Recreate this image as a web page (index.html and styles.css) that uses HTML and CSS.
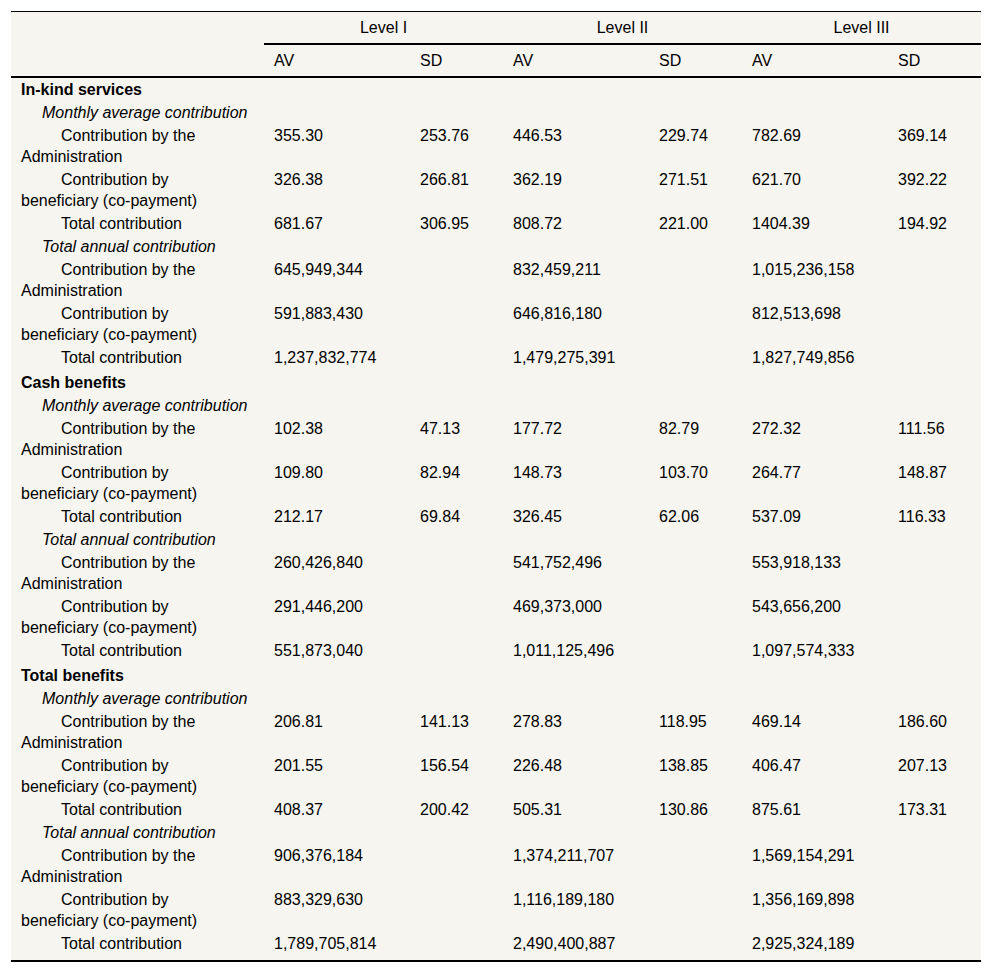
FILE: index.html
```html
<!DOCTYPE html>
<html lang="en">
<head>
<meta charset="utf-8">
<title>Contributions by level</title>
<link rel="stylesheet" href="styles.css">
</head>
<body>
<div class="wrap">
<table class="data">
  <colgroup>
    <col class="c-label">
    <col class="c-av"><col class="c-sd">
    <col class="c-av"><col class="c-sd">
    <col class="c-av"><col class="c-sd">
  </colgroup>
  <thead>
    <tr class="levels">
      <th class="corner" rowspan="2"></th>
      <th class="level" colspan="2">Level I</th>
      <th class="level" colspan="2">Level II</th>
      <th class="level" colspan="2">Level III</th>
    </tr>
    <tr class="stats">
      <th>AV</th><th>SD</th><th>AV</th><th>SD</th><th>AV</th><th>SD</th>
    </tr>
  </thead>
  <tbody>
    <tr><td class="section">In-kind services</td><td></td><td></td><td></td><td></td><td></td><td></td></tr>
    <tr><td class="group">Monthly average contribution</td><td></td><td></td><td></td><td></td><td></td><td></td></tr>
    <tr><td class="item">Contribution by the Administration</td><td>355.30</td><td>253.76</td><td>446.53</td><td>229.74</td><td>782.69</td><td>369.14</td></tr>
    <tr><td class="item">Contribution by beneficiary (co-payment)</td><td>326.38</td><td>266.81</td><td>362.19</td><td>271.51</td><td>621.70</td><td>392.22</td></tr>
    <tr><td class="item">Total contribution</td><td>681.67</td><td>306.95</td><td>808.72</td><td>221.00</td><td>1404.39</td><td>194.92</td></tr>
    <tr><td class="group">Total annual contribution</td><td></td><td></td><td></td><td></td><td></td><td></td></tr>
    <tr><td class="item">Contribution by the Administration</td><td>645,949,344</td><td></td><td>832,459,211</td><td></td><td>1,015,236,158</td><td></td></tr>
    <tr><td class="item">Contribution by beneficiary (co-payment)</td><td>591,883,430</td><td></td><td>646,816,180</td><td></td><td>812,513,698</td><td></td></tr>
    <tr class="last"><td class="item">Total contribution</td><td>1,237,832,774</td><td></td><td>1,479,275,391</td><td></td><td>1,827,749,856</td><td></td></tr>
  </tbody>
  <tbody>
    <tr><td class="section">Cash benefits</td><td></td><td></td><td></td><td></td><td></td><td></td></tr>
    <tr><td class="group">Monthly average contribution</td><td></td><td></td><td></td><td></td><td></td><td></td></tr>
    <tr><td class="item">Contribution by the Administration</td><td>102.38</td><td>47.13</td><td>177.72</td><td>82.79</td><td>272.32</td><td>111.56</td></tr>
    <tr><td class="item">Contribution by beneficiary (co-payment)</td><td>109.80</td><td>82.94</td><td>148.73</td><td>103.70</td><td>264.77</td><td>148.87</td></tr>
    <tr><td class="item">Total contribution</td><td>212.17</td><td>69.84</td><td>326.45</td><td>62.06</td><td>537.09</td><td>116.33</td></tr>
    <tr><td class="group">Total annual contribution</td><td></td><td></td><td></td><td></td><td></td><td></td></tr>
    <tr><td class="item">Contribution by the Administration</td><td>260,426,840</td><td></td><td>541,752,496</td><td></td><td>553,918,133</td><td></td></tr>
    <tr><td class="item">Contribution by beneficiary (co-payment)</td><td>291,446,200</td><td></td><td>469,373,000</td><td></td><td>543,656,200</td><td></td></tr>
    <tr class="last"><td class="item">Total contribution</td><td>551,873,040</td><td></td><td>1,011,125,496</td><td></td><td>1,097,574,333</td><td></td></tr>
  </tbody>
  <tbody>
    <tr><td class="section">Total benefits</td><td></td><td></td><td></td><td></td><td></td><td></td></tr>
    <tr><td class="group">Monthly average contribution</td><td></td><td></td><td></td><td></td><td></td><td></td></tr>
    <tr><td class="item">Contribution by the Administration</td><td>206.81</td><td>141.13</td><td>278.83</td><td>118.95</td><td>469.14</td><td>186.60</td></tr>
    <tr><td class="item">Contribution by beneficiary (co-payment)</td><td>201.55</td><td>156.54</td><td>226.48</td><td>138.85</td><td>406.47</td><td>207.13</td></tr>
    <tr><td class="item">Total contribution</td><td>408.37</td><td>200.42</td><td>505.31</td><td>130.86</td><td>875.61</td><td>173.31</td></tr>
    <tr><td class="group">Total annual contribution</td><td></td><td></td><td></td><td></td><td></td><td></td></tr>
    <tr><td class="item">Contribution by the Administration</td><td>906,376,184</td><td></td><td>1,374,211,707</td><td></td><td>1,569,154,291</td><td></td></tr>
    <tr><td class="item">Contribution by beneficiary (co-payment)</td><td>883,329,630</td><td></td><td>1,116,189,180</td><td></td><td>1,356,169,898</td><td></td></tr>
    <tr class="last final"><td class="item">Total contribution</td><td>1,789,705,814</td><td></td><td>2,490,400,887</td><td></td><td>2,925,324,189</td><td></td></tr>
  </tbody>
</table>
</div>
</body>
</html>
```

FILE: styles.css
```css
html, body {
  margin: 0;
  padding: 0;
  background: #ffffff;
}

.wrap {
  padding: 11px 11px 0 11px;
}

.data {
  width: 970px;
  table-layout: fixed;
  border-collapse: collapse;
  background: #f7f5ef;
  color: #000;
  font-family: "Liberation Sans", Arial, Helvetica, sans-serif;
  font-size: 16px;
  line-height: 21px;
  border-top: 1px solid #000;
  border-bottom: 2px solid #000;
}

.c-label { width: 253px; }
.c-av { width: 146px; }
.c-sd { width: 93px; }

.data th {
  font-weight: normal;
  padding: 5px 10px;
  text-align: left;
  vertical-align: middle;
}

.data th.level {
  text-align: center;
  border-bottom: 2px solid #000;
}

.data .corner {
  border-bottom: 2px solid #000;
}

.data .stats th {
  border-bottom: 2px solid #000;
}

.data td {
  padding: 1px 10px;
  text-align: left;
  vertical-align: top;
}

.data td.section {
  font-weight: bold;
}

.data td.group {
  font-style: italic;
  text-indent: 21px;
  padding-right: 0;
  white-space: nowrap;
}

.data td.item {
  text-indent: 40px;
  padding-right: 20px;
}

.data tr.last td {
  padding-bottom: 3px;
}

.data tr.final td {
  padding-bottom: 6px;
}
```
